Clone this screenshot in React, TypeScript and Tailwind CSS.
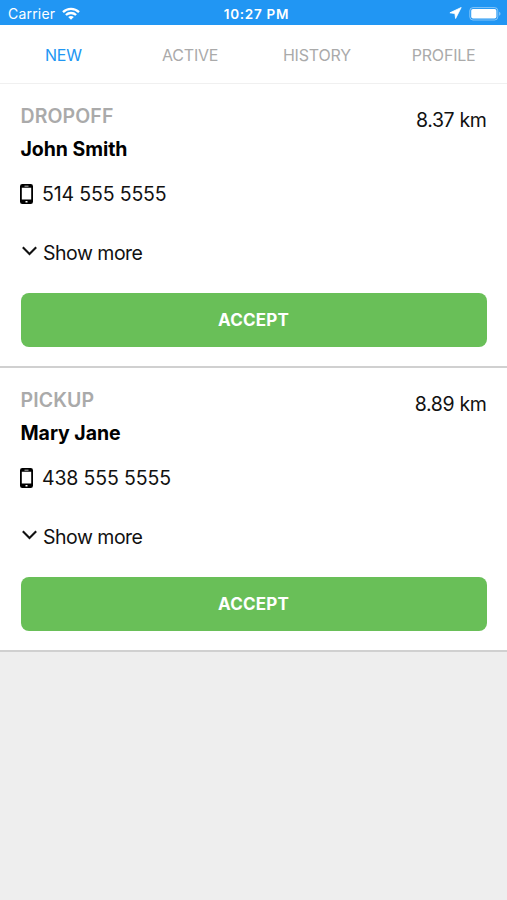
import React from 'react';

interface Job {
  type: string;
  name: string;
  phone: string;
  distance: string;
}

const jobs: Job[] = [
  { type: 'DROPOFF', name: 'John Smith', phone: '514 555 5555', distance: '8.37 km' },
  { type: 'PICKUP', name: 'Mary Jane', phone: '438 555 5555', distance: '8.89 km' },
];

const tabs = ['NEW', 'ACTIVE', 'HISTORY', 'PROFILE'];

const StatusBar: React.FC = () => (
  <div className="grid h-[25px] grid-cols-3 items-center bg-[#2196f3] pl-2 pr-[6px] pt-[2px] text-white">
    <div className="flex items-center gap-[7px]">
      <span className="text-[14px] leading-5 tracking-[0.2px]">Carrier</span>
      <svg className="mb-px" width="18" height="13" viewBox="0 0 18 13" fill="none" stroke="currentColor" strokeWidth="2.3">
        <path d="M1 5.1C5.4.8 12.6.8 17 5.1" />
        <path d="M3.9 8c2.9-2.7 7.3-2.7 10.2 0" />
        <path d="M9 12.8 6.2 10c1.6-1.4 4-1.4 5.6 0z" fill="currentColor" stroke="none" />
      </svg>
    </div>
    <div className="pl-[4px] text-center text-[13.5px] font-semibold leading-5 tracking-[0.7px]">10:27 PM</div>
    <div className="flex items-center justify-end gap-[7px]">
      <svg className="mb-px" width="13" height="12" viewBox="0 0 13 12" fill="currentColor" stroke="currentColor" strokeWidth=".8" strokeLinejoin="round">
        <path d="M12.2.5.9 5.8l5 .8.7 4.9z" />
      </svg>
      <svg width="32" height="14" viewBox="0 0 32 14" fill="none">
        <rect x=".8" y=".6" width="28" height="12.4" rx="3.2" stroke="#fff" strokeOpacity=".45" />
        <rect x="2.2" y="2" width="25.2" height="9.6" rx="1.8" fill="#fff" />
        <path d="M30.2 4.8c1.7.7 1.7 3.3 0 4z" fill="#fff" fillOpacity=".5" />
      </svg>
    </div>
  </div>
);

const JobCard: React.FC<{ job: Job }> = ({ job }) => (
  <div className="h-[284px] border-b-2 border-[#d0d0d0] bg-white px-[20.5px] pt-[18px]">
    <div className="flex justify-between">
      <div>
        <div className="text-[19.5px] font-semibold leading-[28px] tracking-[0.1px] text-[#aaa]">{job.type}</div>
        <div className="mt-[5px] text-[19.5px] font-bold leading-[28px] tracking-[-0.05px] text-black">{job.name}</div>
      </div>
      <div className="pt-[4px] text-[19.5px] leading-[28px] tracking-[-0.35px]">{job.distance}</div>
    </div>

    <div className="mt-[17px] flex items-center gap-[9.5px]">
      <svg className="-ml-px" width="13" height="20" viewBox="0 0 13 20">
        <path
          fillRule="evenodd"
          d="M2.3 0h8.4A2.3 2.3 0 0 1 13 2.3v15.4a2.3 2.3 0 0 1-2.3 2.3H2.3A2.3 2.3 0 0 1 0 17.7V2.3A2.3 2.3 0 0 1 2.3 0zM1.8 3.8v11.8h9.4V3.8zM4.5 1.7v.7h4v-.7zM5.5 17v1.4h2V17z"
        />
      </svg>
      <span className="text-[19.5px] leading-[28px] tracking-[-0.15px]">{job.phone}</span>
    </div>

    <div className="mt-[31px] flex items-center gap-[6.5px]">
      <svg className="mb-[4px] ml-[1px]" width="15" height="10" viewBox="0 0 15 10" fill="none" stroke="currentColor" strokeWidth="2.1">
        <path d="m.8 1.3 6.7 6.8 6.7-6.8" />
      </svg>
      <span className="text-[19.5px] leading-[28px] tracking-[-0.5px]">Show more</span>
    </div>

    <button className="mt-[25.5px] block h-[54px] w-full rounded-lg bg-[#69bf58] pt-[2px] text-[17px] font-bold tracking-[0.2px] text-white">
      ACCEPT
    </button>
  </div>
);

export default function App() {
  return (
    <div className="min-h-screen bg-[#eee] font-['Inter',sans-serif] text-[#111]">
      <StatusBar />
      <div className="grid h-[59px] grid-cols-4 items-center border-b border-[#f0f0f0] bg-white pt-[2px]">
        {tabs.map((tab, i) => (
          <div
            key={tab}
            className={`text-center text-[16px] tracking-[-0.2px] ${i === 0 ? 'text-[#2196f3]' : 'text-[#aaa]'}`}
          >
            {tab}
          </div>
        ))}
      </div>
      {jobs.map((job) => (
        <JobCard key={job.phone} job={job} />
      ))}
    </div>
  );
}
